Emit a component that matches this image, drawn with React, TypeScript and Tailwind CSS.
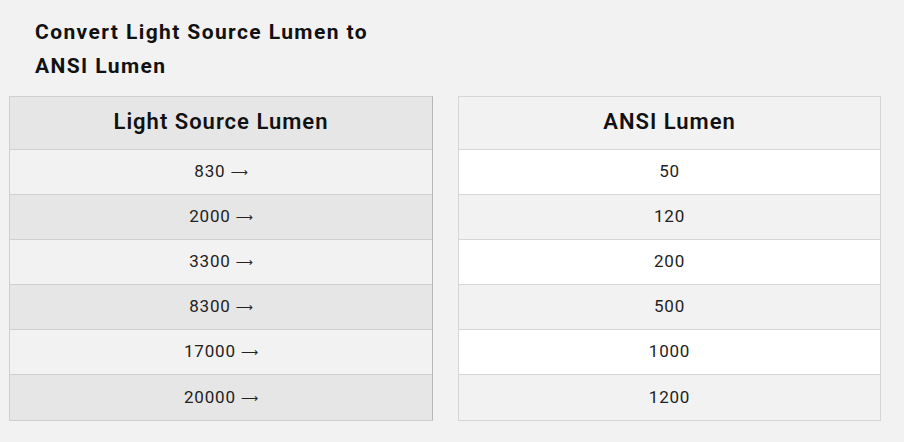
import React from "react";

const left = ["830", "2000", "3300", "8300", "17000", "20000"];
const right = ["50", "120", "200", "500", "1000", "1200"];

export default function App() {
  return (
    <div
      className="w-[904px] h-[442px] bg-[#f2f2f2] text-[#222]"
      style={{ fontFamily: "Roboto, 'Noto Sans', sans-serif" }}
    >
      <div className="pt-[15px] pl-[35px] w-[415px] text-[21px] leading-[34px] font-bold tracking-[1.4px] text-[#111]">
        Convert Light Source Lumen to ANSI Lumen
      </div>
      <div className="flex gap-[25px] pl-[9px] mt-[13px]">
        <div className="w-[424px] border border-[#cfcfcf] border-r-[#b8b8b8]">
          <div className="h-[53px] pb-[3px] flex items-center justify-center bg-[#e6e6e6] text-[22px] font-semibold tracking-[1px] text-[#111] border-b border-[#cfcfcf]">
            Light Source Lumen
          </div>
          {left.map((v, i) => (
            <div
              key={v}
              className={
                "h-[45px] flex items-center justify-center text-[17px] tracking-[0.8px] " +
                (i < left.length - 1 ? "border-b border-[#cfcfcf] " : "") +
                (i % 2 === 0 ? "bg-[#f2f2f2]" : "bg-[#e6e6e6]")
              }
            >
              {v}
              <span
                className="ml-[5px] tracking-normal text-[12px] leading-none"
                style={{ fontFamily: "'DejaVu Sans', sans-serif" }}
              >
                ⟶
              </span>
            </div>
          ))}
        </div>
        <div className="w-[423px] border border-[#d6d6d6]">
          <div className="h-[53px] pb-[3px] flex items-center justify-center bg-[#f2f2f2] text-[22px] font-semibold tracking-[1px] text-[#111] border-b border-[#d6d6d6]">
            ANSI Lumen
          </div>
          {right.map((v, i) => (
            <div
              key={v}
              className={
                "h-[45px] flex items-center justify-center text-[17px] tracking-[0.8px] " +
                (i < right.length - 1 ? "border-b border-[#d6d6d6] " : "") +
                (i % 2 === 0 ? "bg-white" : "bg-[#f2f2f2]")
              }
            >
              {v}
            </div>
          ))}
        </div>
      </div>
    </div>
  );
}
